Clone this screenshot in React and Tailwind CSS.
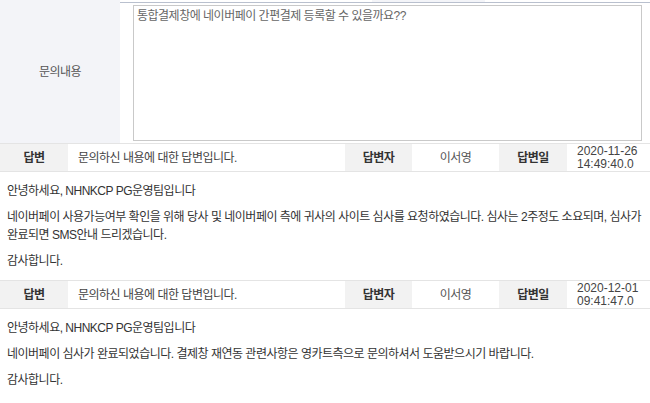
const answers = [
  {
    author: "이서영",
    date: "2020-11-26",
    time: "14:49:40.0",
    body: [
      "안녕하세요, NHNKCP PG운영팀입니다",
      "네이버페이 사용가능여부 확인을 위해 당사 및 네이버페이 측에 귀사의 사이트 심사를 요청하였습니다. 심사는 2주정도 소요되며, 심사가 완료되면 SMS안내 드리겠습니다.",
      "감사합니다.",
    ],
  },
  {
    author: "이서영",
    date: "2020-12-01",
    time: "09:41:47.0",
    body: [
      "안녕하세요, NHNKCP PG운영팀입니다",
      "네이버페이 심사가 완료되었습니다. 결제창 재연동 관련사항은 영카트측으로 문의하셔서 도움받으시기 바랍니다.",
      "감사합니다.",
    ],
  },
];

const AnswerRow = ({ answer }) => (
  <div>
    <div className="flex h-[29px] border-y border-[#e4e4e4] text-[12px] tracking-[-0.5px]">
      <div className="flex w-[68px] items-center justify-center bg-[#f2f2f2] font-bold text-[#333]">
        답변
      </div>
      <div className="flex flex-1 items-center pl-[10px] text-[#444]">
        문의하신 내용에 대한 답변입니다.
      </div>
      <div className="flex w-[67px] items-center justify-center bg-[#f2f2f2] font-bold text-[#333]">
        답변자
      </div>
      <div className="flex w-[87px] items-center justify-center text-[#555]">
        {answer.author}
      </div>
      <div className="flex w-[68px] items-center justify-center bg-[#f2f2f2] font-bold text-[#333]">
        답변일
      </div>
      <div className="flex w-[83px] flex-col justify-center pl-[10px] font-['Liberation_Sans',sans-serif] text-[12px] leading-[13px] tracking-normal text-[#444]">
        <span>{answer.date}</span>
        <span>{answer.time}</span>
      </div>
    </div>
    <div className="break-keep px-[7px] py-[10px] text-[12px] leading-[18px] tracking-[-0.5px] text-[#333]">
      {answer.body.map((line, i) => (
        <p key={i} className={i > 0 ? "mt-[8px]" : ""}>
          {line}
        </p>
      ))}
    </div>
  </div>
);

export default function App() {
  return (
    <div className="h-[403px] w-[650px] overflow-hidden bg-white font-['Liberation_Sans','Noto_Sans_CJK_KR',sans-serif]">
      <div className="flex h-[143px]">
        <div className="flex w-[120px] items-center justify-center bg-[#f3f4f8] text-[12px] tracking-[-0.5px] text-[#555]">
          문의내용
        </div>
        <div className="flex flex-1 flex-col">
          <div className="flex h-[2px]">
            <div className="ml-[252px] w-[113px] bg-[#f3f4f8]" />
          </div>
          <div className="flex-1 border-t border-[#b9c0ce] pb-[2px] pl-[13px] pr-[8px] pt-[2px]">
            <textarea
              readOnly
              defaultValue="통합결제창에 네이버페이 간편결제 등록할 수 있을까요??"
              className="block h-[136px] w-full resize-none border border-[#c9c9c9] px-[3px] py-[3px] text-[12px] leading-[15px] tracking-[-0.5px] text-[#666] outline-none"
            />
          </div>
        </div>
      </div>
      {answers.map((answer) => (
        <AnswerRow key={answer.date} answer={answer} />
      ))}
    </div>
  );
}
